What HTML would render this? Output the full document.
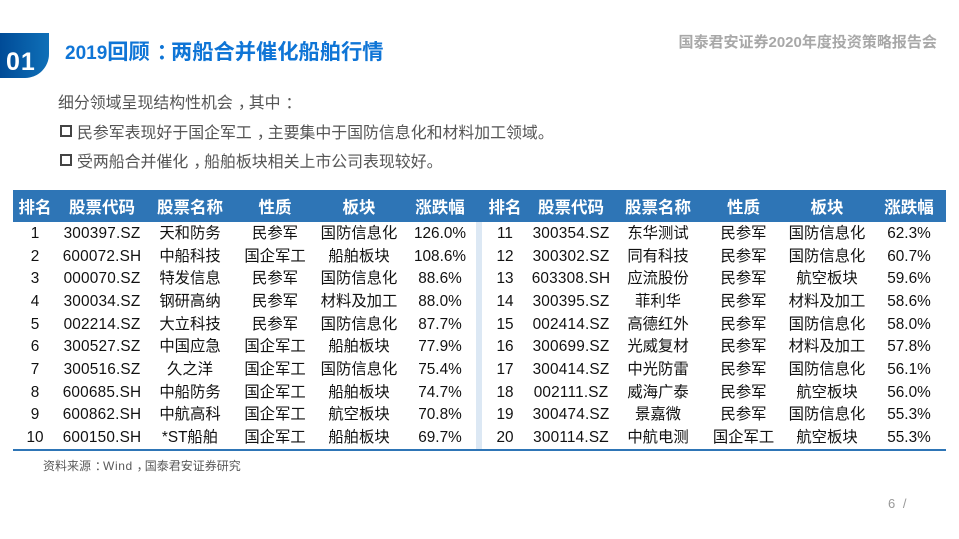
<!DOCTYPE html>
<html lang="zh"><head><meta charset="utf-8"><style>
html,body{margin:0;padding:0;background:#fff}
body{width:959px;height:539px;position:relative;overflow:hidden;font-family:"Liberation Sans","Noto Sans CJK SC",sans-serif}
.a{position:absolute;white-space:nowrap}
.p{display:inline-block;width:1em;transform:translateX(.32em)}
#badge{left:0;top:33px;width:49px;height:45px;background:linear-gradient(90deg,#004b97,#0f70b8);border-bottom-right-radius:24px}
#num{left:6px;top:47px;font-size:25px;line-height:30px;font-weight:bold;color:#fff;letter-spacing:1px}
#title{left:65px;top:38px;font-size:21.25px;line-height:29px;font-weight:bold;color:#0f75d6}
#title span.y{font-size:19px}
#top{left:678.5px;top:34px;font-size:15px;line-height:18px;font-weight:bold;color:#a8a8a8}
.t{left:58px;font-size:15.9px;line-height:22px;color:#555}
.sq{left:60px;width:7.5px;height:7.5px;border:2px solid #444}
table{position:absolute;left:13px;top:190px;width:933px;border-collapse:collapse;table-layout:fixed;font-size:15.35px;color:#111}
th{height:32px;padding:0;background:#2e75b6;color:#fff;font-size:16.5px;font-weight:bold;text-align:center;white-space:nowrap}
td{height:20.65px;padding:2px 0 0;text-align:center;line-height:20.65px;white-space:nowrap;overflow:visible}
td.n{letter-spacing:.2px}
#div{left:476px;top:222px;width:6px;height:227px;background:#dce8f4}
#line{left:13px;top:449px;width:933px;height:2px;background:#2e75b6}
#src{left:43px;top:458px;font-size:12px;line-height:16px;color:#595959}
#src b{font-weight:normal;letter-spacing:.6px}
#page{left:888px;top:496px;font-size:13px;line-height:16px;color:#999;letter-spacing:2px}
</style></head><body>
<div class="a" id="badge"></div><div class="a" id="num">01</div>
<div class="a" id="title"><span class="y">2019</span>回顾<span class="p">：</span>两船合并催化船舶行情</div>
<div class="a" id="top">国泰君安证券2020年度投资策略报告会</div>
<div class="a t" style="top:93px">细分领域呈现结构性机会<span class="p">，</span>其中<span class="p">：</span></div>
<div class="a sq" style="top:125px"></div>
<div class="a t" style="left:77px;top:123px">民参军表现好于国企军工<span class="p">，</span>主要集中于国防信息化和材料加工领域。</div>
<div class="a sq" style="top:154px"></div>
<div class="a t" style="left:77px;top:152px">受两船合并催化<span class="p">，</span>船舶板块相关上市公司表现较好。</div>
<div class="a" id="div"></div>
<table>
<colgroup><col style="width:44px"><col style="width:90px"><col style="width:86px"><col style="width:84px"><col style="width:84px"><col style="width:78px"><col style="width:52px"><col style="width:80px"><col style="width:94px"><col style="width:77px"><col style="width:90px"><col style="width:74px"></colgroup>
<tr><th>排名</th><th>股票代码</th><th>股票名称</th><th>性质</th><th>板块</th><th>涨跌幅</th><th>排名</th><th>股票代码</th><th>股票名称</th><th>性质</th><th>板块</th><th>涨跌幅</th></tr>
<tr><td>1</td><td class="n">300397.SZ</td><td>天和防务</td><td>民参军</td><td>国防信息化</td><td>126.0%</td><td>11</td><td class="n">300354.SZ</td><td>东华测试</td><td>民参军</td><td>国防信息化</td><td>62.3%</td></tr>
<tr><td>2</td><td class="n">600072.SH</td><td>中船科技</td><td>国企军工</td><td>船舶板块</td><td>108.6%</td><td>12</td><td class="n">300302.SZ</td><td>同有科技</td><td>民参军</td><td>国防信息化</td><td>60.7%</td></tr>
<tr><td>3</td><td class="n">000070.SZ</td><td>特发信息</td><td>民参军</td><td>国防信息化</td><td>88.6%</td><td>13</td><td class="n">603308.SH</td><td>应流股份</td><td>民参军</td><td>航空板块</td><td>59.6%</td></tr>
<tr><td>4</td><td class="n">300034.SZ</td><td>钢研高纳</td><td>民参军</td><td>材料及加工</td><td>88.0%</td><td>14</td><td class="n">300395.SZ</td><td>菲利华</td><td>民参军</td><td>材料及加工</td><td>58.6%</td></tr>
<tr><td>5</td><td class="n">002214.SZ</td><td>大立科技</td><td>民参军</td><td>国防信息化</td><td>87.7%</td><td>15</td><td class="n">002414.SZ</td><td>高德红外</td><td>民参军</td><td>国防信息化</td><td>58.0%</td></tr>
<tr><td>6</td><td class="n">300527.SZ</td><td>中国应急</td><td>国企军工</td><td>船舶板块</td><td>77.9%</td><td>16</td><td class="n">300699.SZ</td><td>光威复材</td><td>民参军</td><td>材料及加工</td><td>57.8%</td></tr>
<tr><td>7</td><td class="n">300516.SZ</td><td>久之洋</td><td>国企军工</td><td>国防信息化</td><td>75.4%</td><td>17</td><td class="n">300414.SZ</td><td>中光防雷</td><td>民参军</td><td>国防信息化</td><td>56.1%</td></tr>
<tr><td>8</td><td class="n">600685.SH</td><td>中船防务</td><td>国企军工</td><td>船舶板块</td><td>74.7%</td><td>18</td><td class="n">002111.SZ</td><td>威海广泰</td><td>民参军</td><td>航空板块</td><td>56.0%</td></tr>
<tr><td>9</td><td class="n">600862.SH</td><td>中航高科</td><td>国企军工</td><td>航空板块</td><td>70.8%</td><td>19</td><td class="n">300474.SZ</td><td>景嘉微</td><td>民参军</td><td>国防信息化</td><td>55.3%</td></tr>
<tr><td>10</td><td class="n">600150.SH</td><td>*ST船舶</td><td>国企军工</td><td>船舶板块</td><td>69.7%</td><td>20</td><td class="n">300114.SZ</td><td>中航电测</td><td>国企军工</td><td>航空板块</td><td>55.3%</td></tr>
</table>
<div class="a" id="line"></div>
<div class="a" id="src">资料来源<span class="p">：</span><b>Wind</b><span class="p">，</span>国泰君安证券研究</div>
<div class="a" id="page">6 /</div>
</body></html>
